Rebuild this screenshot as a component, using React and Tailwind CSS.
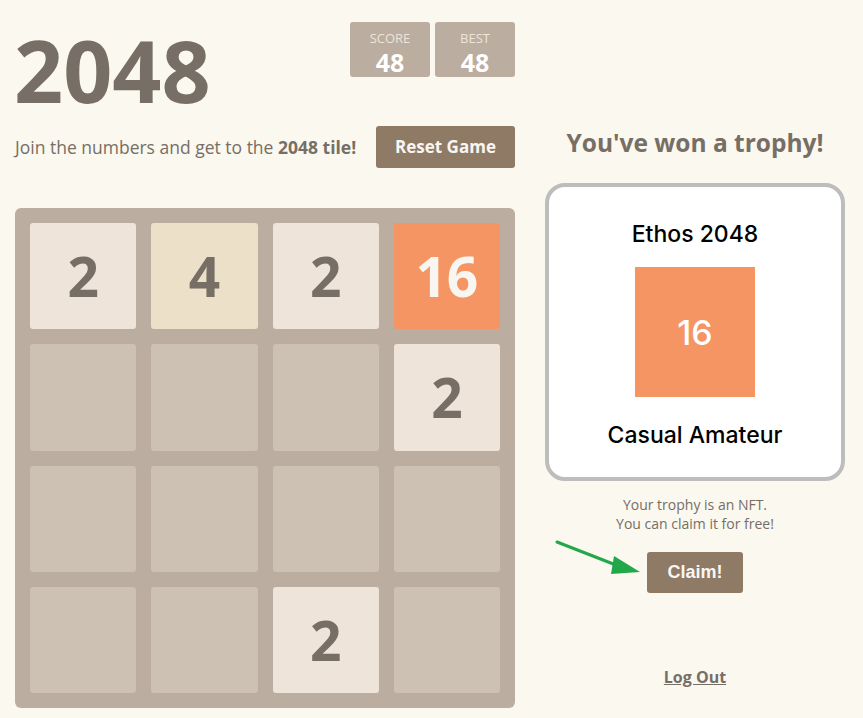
import React from "react";

const board = [
  [2, 4, 2, 16],
  [0, 0, 0, 2],
  [0, 0, 0, 0],
  [0, 0, 2, 0],
];

function Tile({ value }) {
  if (!value) return <div className="rounded-[3px] bg-[#cdc1b4]" />;
  const styles = {
    2: "bg-[#eee4da] text-[#776e65]",
    4: "bg-[#ede0c8] text-[#776e65]",
    16: "bg-[#f59563] text-[#f9f6f2]",
  };
  return (
    <div className={`flex items-center justify-center rounded-[3px] text-[55px] font-bold ${styles[value]}`}>
      {value}
    </div>
  );
}

function ScoreBox({ label, value }) {
  return (
    <div className="flex h-[55px] w-[80px] flex-col items-center rounded-[3px] bg-[#bbada0] pt-[10px]">
      <div className="text-[13px] uppercase leading-[13px] text-[#eee4da]">{label}</div>
      <div className="mt-[6px] text-[25px] font-bold leading-[22px] text-white">{value}</div>
    </div>
  );
}

export default function App() {
  return (
    <div className="min-h-screen w-full bg-[#faf8ef] font-['Open_Sans',sans-serif] text-[#776e65]">
      <div className="flex gap-[30px] pl-[15px]">
        {/* Game column */}
        <div className="flex w-[500px] flex-col">
          <div className="flex items-start justify-between pt-[22px]">
            <h1 className="ml-[-1px] mt-[5px] text-[86px] font-bold leading-none">2048</h1>
            <div className="flex gap-[5px]">
              <ScoreBox label="Score" value="48" />
              <ScoreBox label="Best" value="48" />
            </div>
          </div>

          <div className="mt-[13px] flex items-center justify-between">
            <p className="text-[17.5px]">
              Join the numbers and get to the <strong>2048 tile!</strong>
            </p>
            <button className="h-[42px] w-[139px] rounded-[3px] bg-[#8f7a66] text-[17px] font-bold text-[#f9f6f2]">
              Reset Game
            </button>
          </div>

          <div className="mt-[40px] grid h-[500px] w-[500px] grid-cols-4 grid-rows-4 gap-[15px] rounded-[6px] bg-[#bbada0] p-[15px]">
            {board.flat().map((v, i) => (
              <Tile key={i} value={v} />
            ))}
          </div>
        </div>

        {/* Trophy column */}
        <div className="flex w-[300px] flex-col items-center pt-[125px]">
          <h2 className="text-[24.5px] font-bold">You've won a trophy!</h2>

          <div className="mt-[21px] flex h-[298px] w-[300px] flex-col items-center rounded-[20px] border-[4px] border-[#bdbdbd] bg-white font-['Inter',sans-serif] text-black">
            <div className="mt-[30px] text-[23px] font-medium">Ethos 2048</div>
            <div className="mt-[16px] flex h-[130px] w-[120px] items-center justify-center bg-[#f59563] text-[34px] font-medium text-white">
              16
            </div>
            <div className="mt-[21px] text-[23px] font-medium">Casual Amateur</div>
          </div>

          <p className="mt-[14px] text-center text-[14px] leading-[19px]">
            Your trophy is an NFT.
            <br />
            You can claim it for free!
          </p>

          <div className="relative mt-[19px]">
            <svg
              className="absolute left-[-92px] top-[-12px]"
              width="90"
              height="40"
              viewBox="0 0 90 40"
            >
              <line x1="2" y1="2" x2="66" y2="27" stroke="#22a84a" strokeWidth="3" strokeLinecap="round" />
              <polygon points="59,16 85,32 56,34" fill="#22a84a" />
            </svg>
            <button className="h-[41px] w-[96px] rounded-[3px] bg-[#8f7a66] font-['Liberation_Sans',sans-serif] text-[18px] font-bold text-[#f9f6f2]">
              Claim!
            </button>
          </div>

          <a href="#" className="mt-[72px] text-[16px] font-bold underline">
            Log Out
          </a>
        </div>
      </div>
    </div>
  );
}
